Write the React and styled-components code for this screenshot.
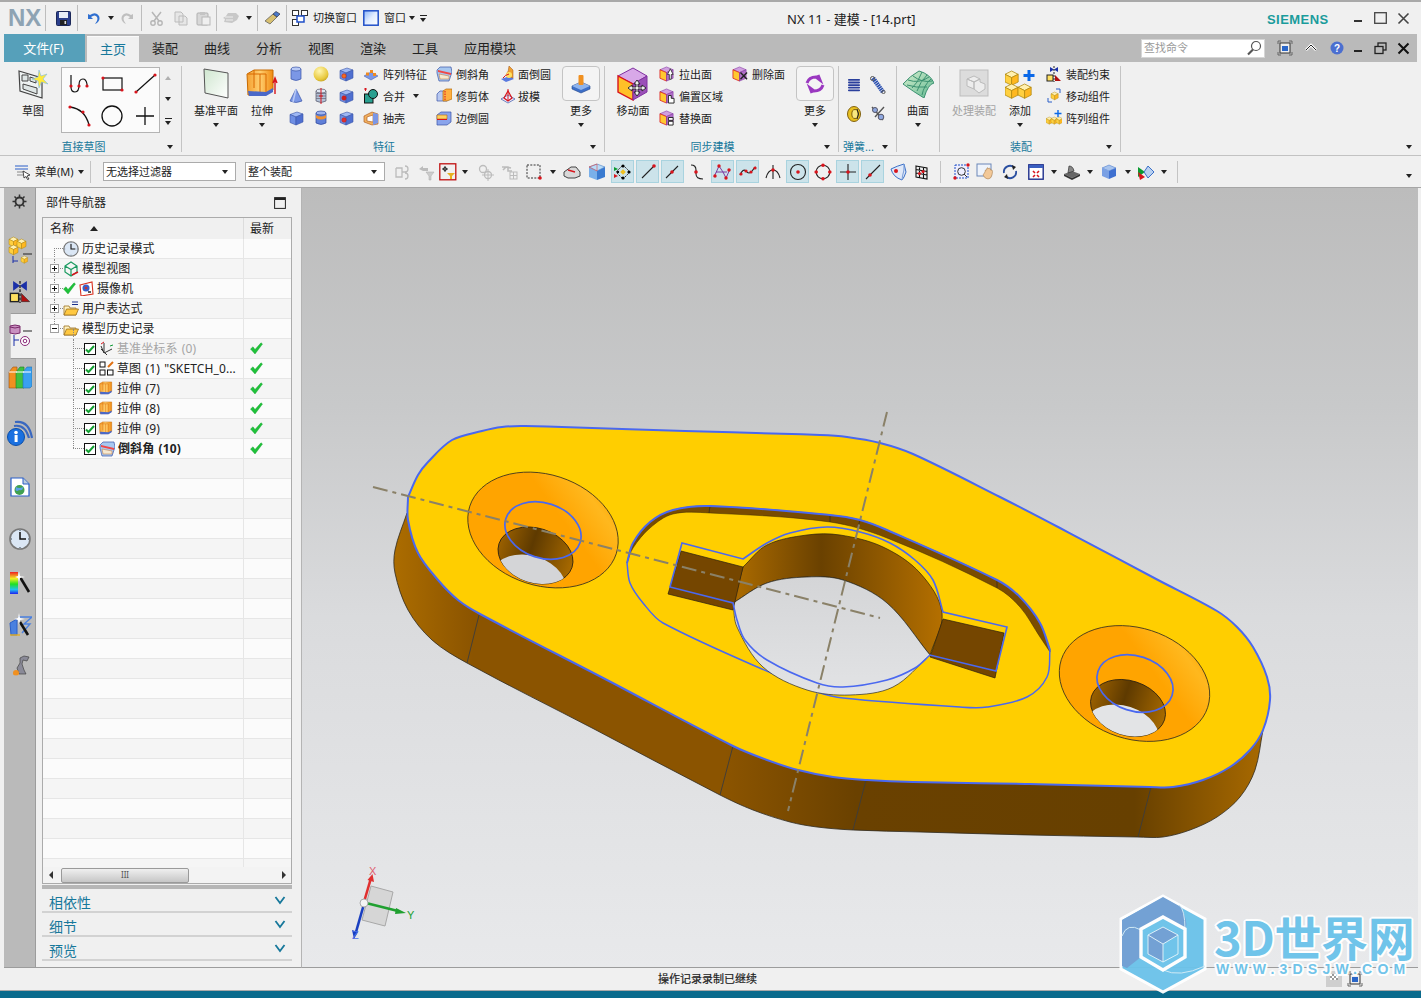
import React from 'react';
import styled, { createGlobalStyle } from 'styled-components';

const FONT = '"Noto Sans", "Noto Sans CJK SC", sans-serif';
const TEAL = '#17789b';

const Global = createGlobalStyle`
  html, body { margin: 0; padding: 0; background: #f0f0f0; }
  * { box-sizing: border-box; }
`;

const Page = styled.div`
  position: relative; width: 1421px; height: 998px; overflow: hidden;
  display: flex; flex-direction: column; background: #f0f0f0;
  font-family: ${FONT}; font-size: 11px; color: #222; line-height: 14px;
`;
const Svg = styled.svg`display: block; flex: none;`;
const Ic = ({ w = 16, h, v, children }) => (
  <Svg width={w} height={h || w} viewBox={v || `0 0 ${w} ${h || w}`}>{children}</Svg>
);

/* ---------- title bar ---------- */
const TitleBar = styled.div`
  height: 34px; flex: none; display: flex; align-items: center;
  border-top: 2px solid #a9a9a9; padding-left: 8px; position: relative;
`;
const NxLogo = styled.div`
  width: 37px; font: bold 24px/30px "Liberation Sans", sans-serif; color: #8ea3b3; letter-spacing: 0;
`;
const QSep = styled.div`width: 1px; height: 26px; background: #bdbdbd; flex: none; margin-left: ${p => p.$ml || 0}px;`;
const QItem = styled.div`
  display: flex; align-items: center; justify-content: center; flex: none;
  width: ${p => p.$w}px; height: 24px; padding-left: ${p => p.$pl || 0}px;
`;
const QGroup = styled.div`display: flex; align-items: center; width: 779px; flex: none;`;
const QText = styled.span`font-size: 11px; white-space: nowrap;`;
const MoreBar = styled.div`display: flex; flex-direction: column; align-items: center; gap: 2px;`;
const MoreBarLine = styled.div`width: 7px; height: 1px; background: #222;`;
const WindowTitle = styled.div`font-size: 13px; line-height: 16px; color: #222; white-space: nowrap; width: 480px; padding-top: 1px;`;
const Siemens = styled.div`
  font: bold 13px/16px "Liberation Sans", sans-serif; letter-spacing: .45px; color: #1a9c9c; width: 82px; white-space: nowrap; padding-top: 3px;
`;
const WinBtn = styled.div`width: ${p => p.$w || 23}px; display: flex; justify-content: center; flex: none;`;

/* ---------- tabs ---------- */
const TabBar = styled.div`
  height: 28px; flex: none; margin: 0 4px; background: #bababa; display: flex; align-items: stretch;
`;
const FileTab = styled.div`
  width: 81px; margin-right: 2px; background: #56a0ba; color: #fff; font-size: 13px;
  display: flex; align-items: center; justify-content: center; padding-right: 2px;
`;
const Tab = styled.div`
  width: ${p => p.$w || 52}px; flex: none; display: flex; align-items: center; justify-content: center; font-size: 13px;
  color: ${p => (p.$on ? TEAL : '#222')};
  ${p => p.$on && `background:#f0f0f0; margin-top:2px; padding-bottom:2px; border-top:1px solid #fafafa;`}
`;
const TabRight = styled.div`margin-left: auto; display: flex; align-items: center; padding-right: 7px;`;
const Search = styled.div`
  width: 124px; height: 19px; background: #fff; border: 1px solid #d6d6d6; color: #9a9a9a; display: flex;
  align-items: center; justify-content: space-between; padding: 0 2px 0 2px; font-size: 11px;
`;
const TabIcon = styled.div`width: ${p => p.$w}px; margin-left: ${p => p.$ml || 0}px; display: flex; justify-content: center; flex: none;`;

/* ---------- ribbon ---------- */
const Ribbon = styled.div`height: 93px; flex: none; display: flex; padding-left: 4px; background: #f0f0f0;`;
const Group = styled.div`
  position: relative; width: ${p => p.$w}px; flex: ${p => (p.$w ? 'none' : 1)}; display: flex; flex-direction: column;
  ${p => p.$w && `&::after { content:''; position:absolute; right:0; top:4px; bottom:3px; width:1px; background:#c4c4c4; }`}
`;
const Body = styled.div`height: 76px; display: flex; padding-top: 1px;`;
const LabelRow = styled.div`
  height: 17px; display: flex; align-items: center;
  ${p => p.$end && 'justify-content: flex-end; padding-right: 9px;'}
`;
const GroupName = styled.div`
  flex: 1; text-align: ${p => p.$left ? 'left' : 'center'}; color: ${TEAL}; font-size: 11px; white-space: nowrap;
  padding-left: ${p => p.$left ? 4 : 0}px;
`;
const Caret = styled.span`
  display: inline-block; flex: none; width: 0; height: 0; border-left: 3.5px solid transparent;
  border-right: 3.5px solid transparent; border-top: 4px solid ${p => p.$c || '#222'};
  margin-left: ${p => p.$ml || 0}px;
  transform: ${p => (p.$up ? 'rotate(180deg)' : 'none')};
`;
const MoreCaret = styled.div`width: 19px; flex: none; padding-left: 4px; display: flex; align-items: center;`;
const Big = styled.div`
  width: ${p => p.$w}px; margin-left: ${p => p.$ml || 0}px; flex: none; display: flex; flex-direction: column; align-items: center;
  color: ${p => (p.$off ? '#a4a4a4' : '#222')}; white-space: nowrap;
`;
const BigIcon = styled.div`height: 41px; display: flex; align-items: center; justify-content: center;`;
const BigLabel = styled.div`height: 14px; line-height: 14px; font-size: 11px;`;
const BigCaret = styled.div`height: 14px; display: flex; align-items: center;`;
const Gallery = styled.div`
  width: 99px; height: 66px; margin: 4px 0 0 8px; background: #fbfbfb; border: 1px solid #b4b4b4; flex: none;
  display: grid; grid-template-columns: repeat(3, 33px); grid-auto-rows: 32px; justify-items: center; align-items: center;
`;
const Scroller = styled.div`
  width: 16px; margin-top: 4px; height: 66px; display: flex; flex-direction: column; align-items: center;
  justify-content: space-around; flex: none;
`;
const IconGrid = styled.div`
  margin-left: ${p => p.$ml}px; display: grid; flex: none;
  grid-template-columns: ${p => p.$cols}; grid-auto-rows: ${p => p.$row || 22}px; justify-items: center; align-items: center;
  padding-top: ${p => p.$pt || 0}px; align-self: flex-start;
`;
const SmallCol = styled.div`width: ${p => p.$w}px; margin-left: ${p => p.$ml || 0}px; flex: none; display: flex; flex-direction: column;`;
const Small = styled.div`
  height: 22px; display: flex; align-items: center; gap: ${p => p.$gap || 4}px; white-space: nowrap; font-size: 11px;
`;
const SmallText = styled.span`padding-top: 1px;`;
const MoreBox = styled.div`
  width: 38px; height: 35px; margin-top: 3px; border: 1px solid #c4c4c4; border-radius: 4px; background: #f4f4f4;
  display: flex; align-items: center; justify-content: center; flex: none;
`;
const MoreWrap = styled.div`
  width: 38px; flex: none; display: flex; flex-direction: column; align-items: center;
`;
const MoreLabel = styled.div`margin-top: 3px; height: 14px; font-size: 11px;`;

/* ---------- toolbar ---------- */
const Toolbar = styled.div`
  height: 33px; flex: none; display: flex; align-items: center; padding-left: 14px; background: #f0f0f0;
  border-top: 1px solid #c2c2c2; border-bottom: 1px solid #a6a6a6;
`;
const MenuBtn = styled.div`display: flex; align-items: center; gap: 4px; width: 76px; flex: none; font-size: 11px;`;
const ToolSep = styled.div`width: 1px; height: 22px; background: #c4c4c4; flex: none; margin-left: ${p => p.$ml}px;`;
const Combo = styled.div`
  width: ${p => p.$w}px; height: 19px; margin-left: ${p => p.$ml}px; background: #fff; border: 1px solid #ababab;
  display: flex; align-items: center; justify-content: space-between; padding: 0 7px 0 2px; font-size: 11px; flex: none;
`;
const Tool = styled.div`
  width: ${p => p.$w}px; height: 24px; flex: none; display: flex; align-items: center; justify-content: center;
  margin-left: ${p => p.$ml || 0}px;
`;
const Chip = styled.div`
  width: 23px; height: 23px; display: flex; align-items: center; justify-content: center; flex: none;
  background: ${p => (p.$on ? '#cce3ea' : 'transparent')}; border: 1px solid ${p => (p.$on ? '#a9d3df' : 'transparent')};
`;
const ToolEnd = styled.div`margin-left: auto; padding: 5px 9px 0 0;`;

/* ---------- main ---------- */
const Main = styled.div`height: 780px; flex: none; display: flex; padding: 0 3px 0 4px;`;
const SideBar = styled.div`
  width: 32px; flex: none; background: #bababa; border-right: 1px solid #9c9c9c; border-bottom: 1px solid #9c9c9c;
  display: flex; flex-direction: column; align-items: center;
`;
const SideItem = styled.div`
  width: 100%; height: ${p => p.$h}px; margin-top: ${p => p.$mt || 0}px; flex: none; display: flex; align-items: center; justify-content: center;
  ${p => p.$on && `background:#f0f0f0; margin-left:6px; width:calc(100% - 5px); padding-right:4px; border-top:1px solid #9c9c9c; border-bottom:1px solid #9c9c9c; border-left:1px solid #c8c8c8;`}
`;
const Nav = styled.div`
  width: 266px; flex: none; display: flex; flex-direction: column; padding-left: 6px;
  border-right: 1px solid #b4b4b4; border-bottom: 1px solid #9c9c9c; background: #f0f0f0;
`;
const NavTitle = styled.div`
  height: 29px; width: 250px; display: flex; align-items: center; justify-content: space-between; padding: 0 6px 0 4px; font-size: 12px;
`;
const TreeBox = styled.div`
  width: 250px; height: 667px; flex: none; border: 1px solid #ababab; display: flex; flex-direction: column; background: #fff; overflow: hidden;
`;
const TreeHead = styled.div`
  height: 21px; flex: none; background: #f0f0f0; display: grid; grid-template-columns: 201px 1fr; font-size: 12px;
`;
const HeadCell = styled.div`
  display: flex; align-items: center; padding-left: ${p => p.$pl}px; gap: 16px;
  ${p => p.$line && 'border-right: 1px solid #dcdcdc;'}
`;
const SortUp = styled.span`width:0;height:0;border-left:4px solid transparent;border-right:4px solid transparent;border-bottom:5px solid #222;`;
const TreeRows = styled.div`flex: 1; overflow: hidden; min-height: 0;`;
const Row = styled.div`
  position: relative; height: 20px; display: grid; grid-template-columns: 201px 1fr;
  background: ${p => (p.$alt ? '#f5f5f5' : '#fbfbfb')}; border-bottom: 1px solid #e6e6e6;
`;
const NameCell = styled.div`
  position: relative; display: flex; align-items: center; gap: 3px; padding-left: ${p => p.$pl}px;
  border-right: 1px solid #e6e6e6; font-size: 12px; white-space: nowrap; overflow: hidden; word-spacing: 1px; letter-spacing: .12px;
  color: ${p => (p.$off ? '#a6a6a6' : '#222')}; font-weight: ${p => (p.$b ? 700 : 400)};
`;
const LatestCell = styled.div`display: flex; align-items: center; padding-left: 6px;`;
const Expander = styled.div`width: 9px; height: 9px; flex: none; margin-right: 1px; position: relative; z-index: 1;`;
const Spacer = styled.div`width: ${p => p.$w}px; flex: none;`;
const VGuide = styled.div`
  position: absolute; left: ${p => p.$x}px; top: ${p => p.$t}px; height: ${p => p.$h}px; border-left: 1px dotted #888;
`;
const HGuide = styled.div`
  position: absolute; left: ${p => p.$x}px; top: 9px; width: ${p => p.$w}px; border-top: 1px dotted #888;
`;
const HScroll = styled.div`
  height: 16px; flex: none; background: #f3f3f3; display: flex; align-items: center; padding: 0 5px 0 6px;
`;
const Thumb = styled.div`
  width: 128px; height: 15px; margin-left: 8px; border: 1px solid #9a9a9a; border-radius: 2px;
  background: linear-gradient(#efefef, #c6c6c6); display: flex; align-items: center; justify-content: center;
  font-size: 8px; line-height: 8px; color: #555; letter-spacing: 0;
`;
const ArrowL = styled.span`width:0;height:0;border-top:4px solid transparent;border-bottom:4px solid transparent;border-right:4px solid #333;flex:none;`;
const ArrowR = styled.span`width:0;height:0;border-top:4px solid transparent;border-bottom:4px solid transparent;border-left:4px solid #333;flex:none;margin-left:auto;`;
const PanelRule = styled.div`width: 250px; height: 4px; background: #b6b6b6; flex: none; margin-top: 1px;`;
const Section = styled.div`
  width: 250px; height: 24px; flex: none; display: flex; align-items: center; justify-content: space-between;
  padding: 5px 6px 0 7px; border-bottom: 2px solid #d2d2d2; color: ${TEAL}; font-size: 14px;
`;
const SectionChev = styled.div`margin-top: -5px;`;
const Viewport = styled.div`
  flex: 1; min-width: 0; background: linear-gradient(#bcbcbc 0%, #c8c9ca 28%, #dadbdd 55%, #e8e9eb 100%);
  border-top: 0; border-bottom: 1px solid #9c9c9c;
`;
const StatusBar = styled.div`
  height: 22px; flex: none; position: relative; display: flex; align-items: center; justify-content: center;
  font-size: 11px; padding-right: 6px; -webkit-text-stroke: .2px #222;
`;
const StatusIcons = styled.div`
  position: absolute; right: 58px; top: 3px; display: flex; gap: 5px; align-items: center;
`;
const Band = styled.div`height: 8px; flex: none; background: #0a6a8c; border-top: 1px solid #a8a8a8;`;

/* ---------- watermark ---------- */
const Watermark = styled.div`
  position: absolute; left: 1119px; top: 894px; width: 300px; display: flex; opacity: .96; pointer-events: none;
`;
const WmText = styled.div`
  margin-left: 7px; display: flex; flex-direction: column; color: #6cc3ea; white-space: nowrap;
  text-shadow: 2px 0 #fff, -2px 0 #fff, 0 2px #fff, 0 -2px #fff, 1.5px 1.5px #fff, -1.5px -1.5px #fff, 1.5px -1.5px #fff, -1.5px 1.5px #fff;
`;
const WmBig = styled.div`font: 700 47px/46px "Noto Sans CJK SC", "Noto Sans", sans-serif; margin-top: 19px; letter-spacing: -.4px;`;
const WmSmall = styled.div`font: 700 14px/14px "Liberation Sans", sans-serif; letter-spacing: 5.2px; margin: 3px 0 0 2px;`;

/* ---------- icons ---------- */
const R = '#d8141c';
const dot = (x, y, r = 1.6) => <circle cx={x} cy={y} r={r} fill={R} />;

const Save = () => <Ic w={15}><rect x=".5" y=".5" width="14" height="14" rx="1" fill="#2b3f8c" stroke="#1c2858" /><rect x="3" y="1" width="9" height="6" fill="#e8eef8" /><rect x="4" y="9" width="7" height="5" fill="#222" /><rect x="8.5" y="10" width="1.6" height="3" fill="#ddd" /></Ic>;
const Undo = ({ c = '#2f6fd0' }) => <Ic w={14}><path d="M2 3 v5 h5 L5 6 Q9 3 11 6 Q12.5 9 9 13 Q15 10 13 5 Q10 0 4 4z" fill={c} /></Ic>;
const Redo = ({ c = '#bfbfbf' }) => <Ic w={14}><path d="M12 3 v5 h-5 L9 6 Q5 3 3 6 Q1.5 9 5 13 Q-1 10 1 5 Q4 0 10 4z" fill={c} /></Ic>;
const Cut = () => <Ic w={15}><path d="M12 1 L5 10 M3 1 L10 10" stroke="#b6b6b6" strokeWidth="1.5" /><circle cx="4" cy="12" r="2.2" fill="none" stroke="#b6b6b6" strokeWidth="1.4" /><circle cx="11" cy="12" r="2.2" fill="none" stroke="#b6b6b6" strokeWidth="1.4" /></Ic>;
const Copy = () => <Ic w={15}><path d="M2 1h6l2 2v8H2z M6 5h6l2 2v7H6z" fill="#e6e6e6" stroke="#bcbcbc" /></Ic>;
const Paste = () => <Ic w={15}><rect x="1" y="2" width="11" height="12" rx="1" fill="#d8d8d8" stroke="#b0b0b0" /><rect x="4" y="1" width="5" height="3" fill="#c4c4c4" /><rect x="6" y="6" width="8" height="8" fill="#efefef" stroke="#b8b8b8" /></Ic>;
const GreySmear = () => <Ic w={18}><path d="M6 4h8l3 3-2 4-5 3-8-1 1-3-2-1 3-2z" fill="#c8c8c8" /><path d="M3 8h8M4 11h7" stroke="#eee" /></Ic>;
const Eraser = () => <Ic w={17}><path d="M1 11 L9 4 L13 7 L6 14z" fill="#d8c070" stroke="#555" strokeWidth=".7" /><path d="M9 4 L12 1.5 L16 4 L13 7z" fill="#4a78c8" stroke="#334" strokeWidth=".7" /></Ic>;
const SwitchWin = () => <Ic w={16}><rect x=".5" y=".5" width="6" height="5" fill="#fff" stroke="#333" /><rect x="9.5" y=".5" width="6" height="5" fill="#fff" stroke="#333" /><rect x=".5" y="9.5" width="6" height="6" fill="#fff" stroke="#333" /><rect x="5" y="6" width="7" height="6" fill="#fff" stroke="#1f4fc8" strokeWidth="1.5" /></Ic>;
const WinIcon = () => <Svg width="16" height="16" viewBox="0 0 16 16"><defs><linearGradient id="wg" x1="0" y1="0" x2="1" y2="1"><stop offset="0" stopColor="#8ab4f8" /><stop offset=".5" stopColor="#e0ecff" /><stop offset="1" stopColor="#fff" /></linearGradient></defs><rect x=".8" y=".8" width="14.4" height="14.4" fill="url(#wg)" stroke="#1f4fc8" strokeWidth="1.5" /></Svg>;
const Min = ({ c = '#333', w = 2 }) => <Ic w={10}><rect x="1" y="7" width="8" height={w} fill={c} /></Ic>;
const Max = () => <Ic w={13}><rect x=".7" y=".7" width="11.6" height="10.6" fill="none" stroke="#444" strokeWidth="1.3" /></Ic>;
const Close = ({ c = '#444', sw = 1.6 }) => <Ic w={13}><path d="M1.5 1.5 L11.5 11.5 M11.5 1.5 L1.5 11.5" stroke={c} strokeWidth={sw} /></Ic>;
const Restore = () => <Ic w={13}><rect x="4" y="1" width="8" height="7" fill="none" stroke="#222" strokeWidth="1.3" /><rect x="1" y="4.5" width="8" height="7" fill="#bababa" stroke="#222" strokeWidth="1.3" /></Ic>;
const Glass = () => <Ic w={16}><circle cx="10" cy="6" r="4.5" fill="#fff" stroke="#555" strokeWidth="1.2" /><path d="M7 9.5 L2 14.5" stroke="#555" strokeWidth="2.2" /></Ic>;
const FitFrame = () => <Ic w={16}><path d="M1 4V1h3 M12 1h3v3 M15 12v3h-3 M4 15H1v-3" fill="none" stroke="#666" /><rect x="3" y="3" width="10" height="10" fill="#eee" stroke="#333" /><rect x="5" y="6" width="6" height="5" fill="#2a66c8" /></Ic>;
const UpChev = () => <Ic w={14}><path d="M2 9 L7 4 L12 9" fill="none" stroke="#fff" strokeWidth="2.6" /><path d="M2 9 L7 4 L12 9" fill="none" stroke="#222" strokeWidth="1" /></Ic>;
const Help = () => <Svg width="14" height="14" viewBox="0 0 14 14"><circle cx="7" cy="7" r="6.5" fill="#4b6fd0" /><text x="7" y="10.5" textAnchor="middle" fontSize="10" fontWeight="700" fill="#fff" fontFamily="Liberation Sans">?</text></Svg>;

const SketchBig = () => <Ic w={30}><path d="M1 2 L24 9 V29 L2 22z" fill="#eef2f2" stroke="#444" strokeWidth="1.2" /><path d="M4 6h6v6H4z M12 8l6 2v4l-6-2z M5 15l14 4v6L5 20z" fill="#dfe6e6" stroke="#444" /><path d="M21 1 L23 7 L29 5 L25 10 L30 15 L23.5 13 L21 19 L20 12 L14 10 L20 8z" fill="#ffe93a" stroke="#7fb8e8" strokeWidth=".6" /></Ic>;
const Sk1 = () => <Ic w={26}><path d="M5 4 V16 Q5 21 9 21 Q13 21 13 14 Q13 8 17 8 Q20 8 21 13 V16 " fill="none" stroke="#111" strokeWidth="1.2" />{dot(5, 15)}{dot(13, 15)}{dot(21, 15)}</Ic>;
const Sk2 = () => <Ic w={26}><rect x="4" y="7" width="19" height="12" fill="none" stroke="#111" strokeWidth="1.2" />{dot(4, 7)}{dot(23, 19)}</Ic>;
const Sk3 = () => <Ic w={26}><path d="M4 21 L23 4" stroke="#111" strokeWidth="1.2" />{dot(4, 21)}{dot(23, 4)}</Ic>;
const Sk4 = () => <Ic w={26}><path d="M4 4 Q19 6 23 22" fill="none" stroke="#111" strokeWidth="1.3" />{dot(4, 4)}{dot(17, 9)}{dot(23, 22)}</Ic>;
const Sk5 = () => <Ic w={24}><circle cx="12" cy="12" r="10" fill="none" stroke="#111" strokeWidth="1.3" /></Ic>;
const Sk6 = () => <Ic w={20}><path d="M10 1 V19 M1 10 H19" stroke="#111" strokeWidth="1.3" /></Ic>;

const Datum = () => <Svg width="26" height="31" viewBox="0 0 26 31"><defs><linearGradient id="dp" x1="0" y1="0" x2="1" y2="1"><stop offset="0" stopColor="#cfe6cf" /><stop offset="1" stopColor="#fff" /></linearGradient></defs><path d="M1 1 L25 5 V30 L2 25z" fill="url(#dp)" stroke="#555" /></Svg>;
const Extrude = ({ s = 32, arrow = true }) => <Svg width={s} height={s} viewBox="0 0 32 32"><defs><linearGradient id="ex" x1="0" y1="0" x2="1" y2="0"><stop offset="0" stopColor="#f5a030" /><stop offset=".5" stopColor="#ffcf70" /><stop offset="1" stopColor="#f08a10" /></linearGradient></defs><path d="M1 6 L8 2 H27 V22 L20 27 H2z" fill="url(#ex)" stroke="#c86a00" /><path d="M8 2 V20 M2 6 H20 V27 M14 6 V27" stroke="#d96800" fill="none" strokeWidth="1" /><path d="M2 23 L20 24 L27 20 V24 L20 28 H3z" fill="#4a68c8" />{arrow && <path d="M29 26 V12 M27 15 L29 10 L31 15" stroke={R} fill="none" strokeWidth="1.4" />}</Svg>;
const cylBody = (a, b, c) => <><path d="M3 3 V13 Q8 16 13 13 V3z" fill={a} stroke={c} strokeWidth=".7" /><ellipse cx="8" cy="3" rx="5" ry="2" fill={b} stroke={c} strokeWidth=".7" /></>;
const Cyl = () => <Ic w={16}>{cylBody('#7b97e6', '#b8c9f5', '#3a55a8')}</Ic>;
const Sphere = () => <Svg width="16" height="16" viewBox="0 0 16 16"><defs><radialGradient id="sph" cx=".4" cy=".3" r=".8"><stop offset="0" stopColor="#fff6b0" /><stop offset=".7" stopColor="#e8c83c" /><stop offset="1" stopColor="#b89820" /></radialGradient></defs><circle cx="8" cy="8" r="7.5" fill="url(#sph)" /></Svg>;
const Block = ({ hole = '#f07020', top = '#9fb8f4', left = '#6f8fe4', right = '#4f6fd0', k }) => <Ic w={16}><path d="M2 4.5 L9 2 L15 4 L8 7z" fill={top} stroke="#3a55a8" strokeWidth=".6" /><path d="M2 4.5 L8 7 V15 L2 12.5z" fill={left} stroke="#3a55a8" strokeWidth=".6" /><path d="M8 7 L15 4 V12 L8 15z" fill={right} stroke="#3a55a8" strokeWidth=".6" />{hole && <circle cx="6" cy="10" r="2.2" fill={hole} stroke="#c02020" strokeWidth=".6" />}{k}</Ic>;
const Cone = () => <Ic w={16}><path d="M8 1 L14 13 Q8 16 2 13z" fill="#7b97e6" stroke="#3a55a8" strokeWidth=".7" /><path d="M8 1 L5 14" stroke="#b8c9f5" strokeWidth="1.5" /></Ic>;
const Thread = () => <Ic w={16}>{cylBody('#b4c2d8', '#dfe6f2', '#556')}<path d="M3 5.5h10M3 8h10M3 10.5h10" stroke="#667" strokeWidth=".7" /><path d="M8 0V16 M6 8h4" stroke={R} strokeWidth="1" /></Ic>;
const Ring = () => <Ic w={16}>{cylBody('#5f7fd8', '#9fb4ee', '#2f469a')}<path d="M3 5 Q8 8 13 5 V8 Q8 11 3 8z" fill="#f09030" /></Ic>;
const Pattern = () => <Ic w={16}><path d="M1 10 L8 6 L15 10 L8 14z" fill="#7b97e6" stroke="#3a55a8" strokeWidth=".5" /><rect x="3" y="6.5" width="3" height="3" fill="#f08a20" /><rect x="7" y="4" width="3" height="3" fill="#f08a20" /><rect x="10" y="7" width="3" height="3" fill="#f08a20" /></Ic>;
const Unite = () => <Ic w={16}><path d="M1 1h3M2.5 0v3" stroke={R} /><rect x="1.5" y="6" width="8.5" height="9" fill="#2aa090" stroke="#111" /><circle cx="10" cy="6" r="4.5" fill="#2aa090" stroke="#111" /></Ic>;
const Shell = () => <Ic w={16}><path d="M1 6 L9 2 L15 4 V14 L9 15 L1 12z" fill="#f0b060" stroke="#a85010" strokeWidth=".6" /><path d="M4 7 L10 5 V12 L4 11z" fill="#fff" stroke="#a85010" strokeWidth=".6" /><path d="M10 3 V15 L15 13 V4z" fill="#7b97e6" /></Ic>;
const Chamfer = () => <Ic w={16}><path d="M1 4 L4 1 H15 L16 6 L13 15 H3 L1 7z" fill="#a8c8f0" stroke="#3a55a8" strokeWidth=".7" /><path d="M2 4 L15 7 V9 L2 6z" fill="#f04848" /><path d="M3 8 L13 10 V13 H4z" fill="#f4e8d0" stroke="#c07030" strokeWidth=".5" /></Ic>;
const Trim = () => <Ic w={16}><path d="M1 6 L4 3 H11 V13 H1z" fill="#b8c8f0" stroke="#3a55a8" strokeWidth=".7" /><path d="M7 3 L10 1 H16 V11 L11 13 H7z" fill="#ffb040" stroke="#b06a10" strokeWidth=".7" /><path d="M9 3 V13" stroke={R} strokeDasharray="1.5 1" /></Ic>;
const Blend = () => <Ic w={16}><path d="M1 5 L5 2 H15 V12 L11 15 H1z" fill="#8aa4ec" stroke="#3a55a8" strokeWidth=".7" /><path d="M1 5 H11 V9 H1z" fill="#ffd060" stroke="#b06a10" strokeWidth=".6" /><path d="M1 9 H11 V10 H1z" fill={R} /></Ic>;
const FaceBlend = () => <Ic w={16}><path d="M1 13 L10 10 L14 13 L6 16z" fill="#5a7ae0" /><path d="M9 0 L13 4 V12 L6 9 Q9 5 9 0z" fill="#f0a030" stroke="#a05010" strokeWidth=".5" /><circle cx="9" cy="9" r="3" fill="#ffe060" /><path d="M3 12 Q5 9 9 8" stroke={R} fill="none" /></Ic>;
const Draft = () => <Ic w={16}><path d="M1 11 L8 7 L15 11 L8 15z" fill="#eef" stroke="#3a55a8" strokeWidth=".7" /><path d="M4 10 L8 3 L12 10 L8 13z" fill="none" stroke={R} strokeWidth="1.2" /><path d="M8 1V13" stroke={R} /></Ic>;
const MoreFeat = () => <Ic w={20}><path d="M1 12 L10 8 L19 12 V15 L10 19 L1 15z" fill="#3d6fc8" stroke="#24468c" strokeWidth=".6" /><path d="M1 12 L10 8 L19 12 L10 16z" fill="#8fb4ec" /><rect x="7.5" y="1" width="5" height="10" rx="1" fill="#f09020" /></Ic>;
const SyncCube = ({ k }) => <Ic w={16} v="0 0 17 17"><path d="M1 4 L8 1 L15 4 L8 7z" fill="#d0a0e0" stroke="#8030a0" strokeWidth=".6" /><path d="M1 4 L8 7 V16 L1 13z" fill="#ffc830" stroke={R} strokeWidth=".8" /><path d="M8 7 L15 4 V13 L8 16z" fill="#b070c8" stroke="#8030a0" strokeWidth=".6" />{k}</Ic>;
const MoveFace = () => <Ic w={34}><path d="M2 9 L17 1 L31 9 L17 17z" fill="#d8a8e8" stroke="#8030a0" /><path d="M2 9 L17 17 V33 L2 25z" fill="#ffc028" stroke={R} strokeWidth="1.4" /><path d="M17 17 L31 9 V25 L17 33z" fill="#9a50b8" stroke="#8030a0" /><path d="M21 13 L24 17 H22 V20 H26 V18 L30 21 L26 24 V22 H22 V25 H24 L21 29 L18 25 H20 V22 H16 V24 L12 21 L16 18 V20 H20 V17 H18z" fill="#eee" stroke="#222" strokeWidth=".9" /></Ic>;
const Refresh = () => <Ic w={20}><path d="M2 9 Q4 3 11 3 L15 6 L13 1 M18 11 Q16 17 9 17 L5 14 L7 19" fill="none" stroke="#9a38c0" strokeWidth="3" /></Ic>;
const Coil = () => <Ic w={16}>{[2, 4.6, 7.2, 9.8, 12.4].map(y => <rect key={y} x="2" y={y} width="12" height="1.8" rx=".8" fill="#2a3f9c" />)}</Ic>;
const Spring2 = () => <Ic w={18}><path d="M4 2 L14 16" stroke="#2a4fb0" strokeWidth="4.5" strokeDasharray="1.6 .6" /><circle cx="3.5" cy="2.5" r="2" fill="none" stroke="#555" /><circle cx="14.5" cy="16" r="1.6" fill="none" stroke="#555" /></Ic>;
const Nut = () => <Svg width="16" height="16" viewBox="0 0 16 16"><ellipse cx="8" cy="8" rx="6.5" ry="7.5" fill="#e8c020" stroke="#806010" /><ellipse cx="9" cy="8" rx="3.2" ry="4.5" fill="#f8e880" stroke="#806010" /><path d="M11 3 Q14 8 11 13" stroke="#222" fill="none" /></Svg>;
const Scissor = () => <Ic w={16}><path d="M2 1 L13 14 M14 1 L5 11" stroke="#555" strokeWidth="1.4" /><circle cx="5" cy="4" r="2.5" fill="#8fa8e0" stroke="#556" /><circle cx="11" cy="11" r="2.8" fill="#8fa8e0" stroke="#556" /></Ic>;
const Surface = () => <Svg width="32" height="28" viewBox="0 0 32 28"><defs><linearGradient id="sf" x1="0" y1="0" x2="1" y2="1"><stop offset="0" stopColor="#d8f0d0" /><stop offset="1" stopColor="#60b890" /></linearGradient></defs><path d="M1 14 Q8 6 17 1 Q28 4 32 13 Q26 14 22 28 Q12 22 1 14z" fill="url(#sf)" stroke="#3a9070" /><path d="M6 10 Q17 14 27 7 M11 6 Q20 13 30 11 M5 15 Q14 18 25 17 M10 18 Q16 13 20 2 M15 21 Q18 12 25 5 M20 25 Q22 15 29 9" fill="none" stroke="#3a9070" /></Svg>;
const AsmGrey = () => <Ic w={30}><rect x="1" y="1" width="28" height="26" fill="#dcdcdc" stroke="#bdbdbd" /><path d="M8 10 L15 7 L21 10 L15 13z M8 10 L15 13 V20 L8 17z M15 13 L21 10 V13 L26 15 V20 L20 24 L15 20z" fill="#ededed" stroke="#bbb" /></Ic>;
const yCube = (x, y, s) => <g transform={`translate(${x} ${y}) scale(${s})`}><path d="M0 3 L6 0 L12 3 L6 6z" fill="#fff0b0" stroke="#b08810" strokeWidth=".7" /><path d="M0 3 L6 6 V13 L0 10z" fill="#ffd040" stroke="#b08810" strokeWidth=".7" /><path d="M6 6 L12 3 V10 L6 13z" fill="#ffb820" stroke="#b08810" strokeWidth=".7" /></g>;
const AddAsm = () => <Ic w={30}>{yCube(0, 2, 1.1)}{yCube(0, 15, 1.1)}{yCube(13, 15, 1.1)}<path d="M24 1V12 M18.5 6.5H29.5" stroke="#0a68e8" strokeWidth="3" /></Ic>;
const Constraint = () => <Ic w={16}><rect x="1" y="9" width="6" height="6" fill="#ffe060" stroke="#222" /><path d="M9 9 V15 H15z" fill="#b01010" /><path d="M4 1 L8 3.5 L4 6z M12 1 L8 3.5 L12 6z" fill="#1a2fa8" /><path d="M8 0V16" stroke="#222" strokeDasharray="2 1" /></Ic>;
const MoveComp = () => <Ic w={16}>{yCube(5, 4, .6)}<path d="M2 14V10 M2 14H6 M10 1H14V5" stroke="#2a5fc8" fill="none" /></Ic>;
const PatComp = () => <Ic w={16}>{yCube(0, 7, .55)}{yCube(5, 7, .55)}{yCube(10, 7, .55)}<path d="M12 0V7 M8.5 3.5H15.5" stroke="#0a68e8" strokeWidth="1.4" /></Ic>;

const MenuIcon = () => <Ic w={17}><path d="M1 3h13M1 6h13" stroke="#2a5fc8" strokeWidth="1.2" /><path d="M3 9h8M3 12h6" stroke="#888" /><path d="M9 8 L16 12 L13 13 L15 16 L13.5 16.5 L12 13.5 L10 15z" fill="#fff" stroke="#222" strokeWidth=".8" /></Ic>;
const T = {
  g1: <Ic w={18}><path d="M2 5h6v4h4 M2 5v9h6V5 M11 3a3 3 0 1 1 0 6 M11 10a3 3 0 1 1 0 6" fill="none" stroke="#bcbcbc" strokeWidth="1.3" /></Ic>,
  g2: <Ic w={18}><path d="M1 6 L5 3 L5 5 L10 5 L10 8 L5 8z" fill="#bcbcbc" /><path d="M8 9h8l-3 4v4h-2v-4z" fill="#ccc" stroke="#aaa" strokeWidth=".5" /></Ic>,
  red: <Ic w={18}><rect x=".8" y=".8" width="16" height="16" fill="none" stroke="#c01010" strokeWidth="1.3" /><path d="M6 3V9 M3 6H9" stroke="#333" /><circle cx="6" cy="6" r="1.6" fill="none" stroke="#333" /><path d="M8 10h8l-3 3v3h-2v-3z" fill="#e8b020" /></Ic>,
  g3: <Ic w={18}><circle cx="7" cy="6" r="3.5" fill="none" stroke="#bcbcbc" strokeWidth="1.3" /><circle cx="12" cy="12" r="3.5" fill="none" stroke="#bcbcbc" strokeWidth="1.3" /><path d="M12 6V18 M6 12H18" stroke="#bcbcbc" /></Ic>,
  g4: <Ic w={18}><path d="M1 4h6v4h4M2 7l3-3 5 1" stroke="#bcbcbc" strokeWidth="1.6" fill="none" /><rect x="9" y="9" width="7" height="7" fill="none" stroke="#bcbcbc" /><path d="M12.5 9v7M9 12.5h7" stroke="#bcbcbc" /></Ic>,
  sel: <Ic w={18}><rect x="2" y="2" width="13" height="13" fill="none" stroke="#333" strokeDasharray="2 1.3" />{dot(15, 15, 1.8)}</Ic>,
  wedge: <Ic w={18}><path d="M1 9 L8 4 H13 L17 9 V13 L12 15 H5 L1 13z" fill="#d8d8d8" stroke="#444" /><path d="M5 7 L12 9" stroke={R} strokeWidth="1.4" /></Ic>,
  cube: <Ic w={18}><path d="M1 4 L9 1 L17 4 L9 8z" fill="#b8dcf8" stroke="#4a80c8" strokeWidth=".6" /><path d="M1 4 L9 8 V17 L1 14z" fill="#7ab0ea" /><path d="M9 8 L17 4 V14 L9 17z" fill="#3a7ad0" /><path d="M1 4 L9 1 V8z" stroke="#e04848" fill="none" strokeWidth=".6" /></Ic>,
  dia: <Ic w={18}><path d="M9 2 L16 9 L9 16 L2 9z" fill="none" stroke="#333" strokeDasharray="2 1" /><rect x="7" y="7" width="4" height="4" fill="#f0c020" transform="rotate(45 9 9)" /><path d="M0 4 L4 6 L0 8z" fill="#0a9a30" /><path d="M0 11 L4 13 L0 15z" fill={R} /><circle cx="9" cy="3" r="1.6" /><circle cx="9" cy="15" r="1.6" /><circle cx="15" cy="9" r="1.6" /><circle cx="4" cy="9" r="1.2" /></Ic>,
  l1: <Ic w={16}><path d="M2 14 L14 2" stroke="#222" strokeWidth="1.1" />{dot(14, 2, 1.8)}</Ic>,
  l2: <Ic w={16}><path d="M2 14 L14 2" stroke="#222" strokeWidth="1.1" />{dot(8, 8, 1.8)}</Ic>,
  scurve: <Ic w={16}><path d="M2 1 Q7 1 7 6 V10 Q7 15 14 15" fill="none" stroke="#222" strokeWidth="1.1" />{dot(7, 8, 1.8)}</Ic>,
  poly: <Ic w={18}><path d="M1 14 L6 3 L10 9 L13 15 L17 6 M3 9 H14" fill="none" stroke="#7a3aa0" strokeWidth="1" />{dot(6, 3, 1.7)}{dot(2, 13, 1.7)}{dot(13, 15, 1.7)}{dot(16, 7, 1.7)}</Ic>,
  wave: <Ic w={18}><path d="M1 12 Q4 5 7 8 Q10 12 13 8 Q15 5 17 4" fill="none" stroke="#222" strokeWidth="1.1" />{dot(2, 11)}{dot(7, 8)}{dot(12, 9)}{dot(16, 5)}</Ic>,
  arch: <Ic w={16}><path d="M1 14 Q3 6 8 6 Q13 6 15 14 M8 1V15" fill="none" stroke="#222" strokeWidth="1.1" />{dot(8, 6, 1.8)}</Ic>,
  cd: <Ic w={18}><circle cx="9" cy="9" r="7.5" fill="none" stroke="#222" strokeWidth="1.1" />{dot(9, 9, 1.8)}</Ic>,
  cq: <Ic w={18}><circle cx="9" cy="9" r="6.8" fill="none" stroke="#222" strokeWidth="1.1" />{dot(9, 2.2, 1.8)}{dot(9, 15.8, 1.8)}{dot(2.2, 9, 1.8)}{dot(15.8, 9, 1.8)}</Ic>,
  cross: <Ic w={18}><path d="M9 1V17 M1 9H17" stroke="#222" strokeWidth="1.1" />{dot(9, 9, 1.8)}</Ic>,
  l3: <Ic w={16}><path d="M1 15 L15 1" stroke="#222" strokeWidth="1.1" />{dot(5, 11, 1.8)}</Ic>,
  face: <Ic w={18}><path d="M2 6 Q8 3 15 1 L17 9 Q15 15 13 17 Q4 14 2 6z" fill="#dfe8f8" stroke="#3a6fc8" strokeWidth="1" /><path d="M15 1 V7 Q13 14 13 17" stroke="#7a9ed8" fill="#bcd0f0" />{dot(7, 8, 2)}</Ic>,
  grid: <Ic w={16}><path d="M2 2 L13 4 V15 L2 13z M5.5 2.6V13.6 M9.5 3.4V14.4 M2 5.5 L13 7.5 M2 9 L13 11" fill="none" stroke="#111" strokeWidth="1.1" />{dot(9, 7.5)}{dot(5.5, 9.5)}</Ic>,
  fit: <Ic w={17}><rect x="2" y="2" width="13" height="13" fill="#eef" stroke="#1f4fc8" strokeDasharray="2 1" /><circle cx="8.5" cy="8.5" r="3.8" fill="none" stroke="#333" /><path d="M11 11l3 3" stroke="#333" />{dot(15, 2, 1.7)}{dot(2, 15, 1.7)}</Ic>,
  pan: <Ic w={18}><rect x="1" y="1" width="14" height="12" fill="#eef3fb" stroke="#6a86b8" /><path d="M9 9 Q9 6 10.5 7 L11 5 Q12 4 12.5 6 L13.5 5 Q14.5 5 14.5 7 L16 7 Q17 8 16 12 Q15 16 12 16 Q9 16 7 12z" fill="#f2c898" stroke="#9a7040" strokeWidth=".5" /></Ic>,
  rot: <Ic w={16}><path d="M2 9 A6 6 0 0 1 12 3.5 M14 7 A6 6 0 0 1 4 12.5" fill="none" stroke="#2a4fa0" strokeWidth="1.8" /><path d="M10 1 L14 3 L11 6z M6 15 L2 13 L5 10z" fill="#222" /></Ic>,
  view: <Ic w={16}><rect x=".8" y=".8" width="14.4" height="14.4" fill="#fff" stroke="#1f2f8c" strokeWidth="1.4" /><rect x="1" y="1" width="14" height="3" fill="#3a5fc0" /><path d="M5 7l2 2 M11 7l-2 2 M5 13l2-2 M11 13l-2-2" stroke={R} strokeWidth="1.6" /></Ic>,
  shade: <Ic w={18}><path d="M1 11 L9 8 L17 11 L9 15z" fill="#666" /><path d="M6 3 Q10 3 11 8 L5 10z" fill="#888" stroke="#333" strokeWidth=".7" /><path d="M1 11 V13 L9 17 L17 13 V11 L9 15z" fill="#333" /></Ic>,
  bcube: <Ic w={16}><path d="M1 4 L8 1 L15 4 L8 7z" fill="#a8c4ee" stroke="#3a6fc8" strokeWidth=".5" /><path d="M1 4 L8 7 V15 L1 12z" fill="#7aa0e4" /><path d="M8 7 L15 4 V12 L8 15z" fill="#3f70d0" /></Ic>,
  tri: <Ic w={18}><path d="M1 4 L8 9 L1 14z" fill="#0a9a30" /><path d="M1 9 L8 14 L3 17z" fill={R} /><path d="M11 3 L17 9 L11 15 L7 9z" fill="#b8d0f0" stroke="#3a6fc8" /></Ic>,
};

const Gear = () => <Ic w={15}><circle cx="7.5" cy="7.5" r="4" fill="none" stroke="#333" strokeWidth="1.8" /><path d="M7.5 .5v3M7.5 11.5v3M.5 7.5h3M11.5 7.5h3M2.5 2.5l2 2M10.5 10.5l2 2M12.5 2.5l-2 2M4.5 10.5l-2 2" stroke="#333" strokeWidth="1.5" /></Ic>;
const AsmNav = () => <Ic w={24} h={28} v="0 0 24 28">{yCube(1, 1, .75)}{yCube(9, 3, .75)}{yCube(1, 9, .75)}<path d="M5 20V27 M5 25H10" stroke="#1a2fa8" strokeWidth="1" /><path d="M15 18H24" stroke="#222" />{yCube(13, 20, .55)}</Ic>;
const ConstraintBig = () => <Ic w={22} v="0 0 16 16"><rect x="1" y="9" width="6" height="6" fill="#ffe060" stroke="#222" /><path d="M9 9 V15 H15z" fill="#b01010" stroke="#222" strokeWidth=".4" /><path d="M3 0 L8 3.5 L3 7z M13 0 L8 3.5 L13 7z" fill="#1a2fa8" /><path d="M8 0V16" stroke="#222" strokeDasharray="2 1" /></Ic>;
const PartNav = () => <Ic w={24}><path d="M1 2 Q6 0 11 2 V9 Q6 11 1 9z" fill="#c890c0" stroke="#7a2a6a" /><path d="M1 3 Q6 5 11 3" stroke="#7a2a6a" fill="none" /><path d="M14 7H23" stroke="#222" /><path d="M5 11V22 M5 16H10" stroke="#1a2fa8" /><circle cx="16" cy="17" r="4.5" fill="#fff" stroke="#8a2a7a" /><circle cx="16" cy="17" r="1.8" fill="none" stroke="#8a2a7a" /></Ic>;
const Books = () => <Ic w={24}><path d="M1 6 L5 1 H9 V22 H1z" fill="#f09020" stroke="#a05010" strokeWidth=".6" /><path d="M8 6 L12 1 H16 V22 H8z" fill="#40c040" stroke="#208020" strokeWidth=".6" /><path d="M15 6 L19 1 H24 V20 L22 22 H15z" fill="#3aa0f0" stroke="#2070b0" strokeWidth=".6" /><path d="M1 6H9 M8 6H16 M15 6H23" stroke="#fff" /></Ic>;
const Info = () => <Svg width="26" height="26" viewBox="0 0 26 26"><path d="M7 6 Q18 4 22 18 M8 2 Q22 0 25 18" fill="none" stroke="#3a68c0" strokeWidth="2.2" /><circle cx="9" cy="17" r="8.5" fill="#1a70e0" stroke="#0c4ea8" /><rect x="7.6" y="15" width="3" height="7" fill="#fff" /><circle cx="9" cy="12.5" r="1.8" fill="#fff" /></Svg>;
const WebDoc = () => <Ic w={20}><path d="M1 1 H13 L19 7 V19 H1z" fill="#fff" stroke="#2a5fc8" strokeWidth="1.2" /><path d="M13 1 V7 H19" fill="#bcd" stroke="#2a5fc8" /><circle cx="9.5" cy="13" r="5" fill="#40a050" /><path d="M6 10 Q9 12 13 10 Q13 14 9 13 Q7 15 5.5 13z" fill="#5aa0e8" /></Ic>;
const ClockBig = ({ s = 22 }) => <Svg width={s} height={s} viewBox="0 0 22 22"><circle cx="11" cy="11" r="10" fill="#dbe7f5" stroke="#777" strokeWidth="1.6" /><path d="M11 4 V11 H17" stroke="#111" strokeWidth="1.5" fill="none" /><path d="M11 2v1M11 19v1M2 11h1M19 11h1" stroke="#345" /></Svg>;
const Rainbow = () => <Svg width="22" height="24" viewBox="0 0 22 24"><defs><linearGradient id="rb" x1="0" y1="0" x2="0" y2="1"><stop offset="0" stopColor="#f02020" /><stop offset=".3" stopColor="#f0f020" /><stop offset=".55" stopColor="#20e020" /><stop offset=".8" stopColor="#20c0f0" /><stop offset="1" stopColor="#2020f0" /></linearGradient></defs><rect x="1" y="1" width="8" height="22" fill="url(#rb)" /><path d="M11 6 L20 21" stroke="#111" strokeWidth="2.6" /><path d="M10 0 L11 5 L16 6 L11 7 L10 11 L9 7 L6 6 L9 5z" fill="#fff" /></Svg>;
const Wand = () => <Ic w={24}><path d="M2 10 L9 6 V22 H3z" fill="#4a80e0" stroke="#2a5fc8" /><path d="M10 4H24 L16 11 L22 11 L14 20" fill="none" stroke="#4a80e0" strokeWidth="1.4" /><path d="M12 9 L20 22" stroke="#111" strokeWidth="2.6" /><path d="M11 0 L12 5 L17 6 L12 7 L11 12 L10 7 L6 6 L10 5z" fill="#fff" /><path d="M2 22h10" stroke="#e8b020" strokeWidth="1.4" /></Ic>;
const Robot = () => <Ic w={20} h={22} v="0 0 20 22"><path d="M10 3 L14 1 L19 2 L17 6 L13 5 L12 9 L14 15 L16 19 H9 L7 13 L10 8z" fill="#8a8a98" stroke="#444" strokeWidth=".7" /><circle cx="6" cy="18" r="3" fill="#f09020" /><path d="M2 21H18" stroke="#bbb" strokeWidth="1.2" /></Ic>;

const Check = ({ s = 13 }) => <Ic w={s} v="0 0 13 13"><path d="M.5 7 L3 4.8 L5 7.5 L11 .8 L12.5 2 L5 12z" fill="#1fc23a" stroke="#12a02c" strokeWidth=".4" /></Ic>;
const Maximize = () => <Ic w={12}><rect x=".6" y=".6" width="10.8" height="10.8" fill="none" stroke="#222" strokeWidth="1" /><rect x="1" y="1" width="10" height="2" fill="#222" /></Ic>;
const Exp = ({ minus }) => <Expander><Ic w={9}><rect x=".5" y=".5" width="8" height="8" fill="#fff" stroke="#a0a0a0" /><path d={minus ? 'M2 4.5H7' : 'M2 4.5H7M4.5 2V7'} stroke="#111" /></Ic></Expander>;
const ModelView = () => <Ic w={16}><path d="M2 5 L8 1 L14 5 V11 L8 15 L2 11z M2 5 L8 8.5 L14 5 M8 8.5V15" fill="none" stroke="#1a9a60" strokeWidth="1.2" /><path d="M9 14 L15 11" stroke={R} strokeWidth="1.5" /></Ic>;
const Camera = () => <Ic w={15}><path d="M1 4 L13 1 L14 13 L2 15z" fill="#fff" stroke="#d83020" strokeWidth="1.1" /><circle cx="7" cy="7" r="3.5" fill="#3a5fc8" /><circle cx="7" cy="7" r="1.3" fill="#c83030" /><path d="M9 11h3" stroke="#222" strokeWidth="1.5" /></Ic>;
const Folder = ({ lines }) => <Ic w={16}><path d="M1 5 H6 L7 7 H13 V14 H1z" fill="#fff2c0" stroke="#9a7020" strokeWidth=".8" /><path d="M1 14 L3.5 8 H15.5 L13 14z" fill="#ffc840" stroke="#9a7020" strokeWidth=".8" />{lines && <path d="M9 1h6M9 3.5h6" stroke="#1a2f8c" />}</Ic>;
const CheckBox = () => <Svg width="12" height="12" viewBox="0 0 12 12"><rect x=".5" y=".5" width="11" height="11" fill="#fff" stroke="#111" /><path d="M2 6.5 L4.5 9 L10 3" fill="none" stroke="#12a032" strokeWidth="2" /></Svg>;
const CsysIcon = () => <Ic w={15}><path d="M5 2V12 L13 8 M5 12 L2 5 M2 8 L8 14" fill="none" stroke="#333" strokeWidth="1" /><path d="M2 3 L5 1" stroke={R} /><path d="M11 5 L14 4" stroke="#0a9a30" /></Ic>;
const SketchIcon = () => <Ic w={15}><rect x="1" y="1" width="5" height="5" fill="#fff" stroke="#111" /><rect x="1" y="9" width="5" height="5" fill="#fff" stroke="#111" /><rect x="8.5" y="9" width="5.5" height="5" fill="#fff" stroke="#111" /><path d="M14 1 L9 6" stroke="#e07010" strokeWidth="2" /></Ic>;
const ChevDown = () => <Ic w={12}><path d="M1.5 3 L6 9 L10.5 3" fill="none" stroke="#17789b" strokeWidth="1.8" /></Ic>;
const Flag = () => <Ic w={16}><rect width="16" height="16" fill="#cfcfcf" /><path d="M4 3h8v6H4z" fill="#999" /><path d="M4 3h2v2H4z M8 3h2v2H8z M6 5h2v2H6z M10 5h2v2h-2z M4 7h2v2H4z M8 7h2v2H8z" fill="#fff" /></Ic>;

/* ---------- 3D part ---------- */
const unit = (a, b) => {
  const dx = b[0] - a[0], dy = b[1] - a[1], l = Math.hypot(dx, dy) || 1;
  return [dx / l, dy / l];
};
const curve = pts => {
  let d = '';
  for (let i = 0; i < pts.length - 1; i++) {
    const p0 = pts[i - 1] || pts[i], p1 = pts[i], p2 = pts[i + 1], p3 = pts[i + 2] || p2;
    const len = Math.hypot(p2[0] - p1[0], p2[1] - p1[1]) / 3;
    const t1 = unit(p0, p2), t2 = unit(p1, p3);
    d += `C${p1[0] + t1[0] * len} ${p1[1] + t1[1] * len} ${p2[0] - t2[0] * len} ${p2[1] - t2[1] * len} ${p2[0]} ${p2[1]}`;
  }
  return d;
};
const M = p => `M${p[0]} ${p[1]}`;
const L = p => `L${p[0]} ${p[1]}`;

const TOP = [[408, 497], [418, 475], [428, 462], [452, 440], [482, 431], [502, 427], [525, 426], [685, 431], [820, 435], [847, 437], [880, 443], [913, 454], [1000, 497], [1060, 528], [1158, 580], [1217, 611], [1237, 627], [1253, 647], [1267, 677], [1270, 700], [1263, 730], [1250, 750], [1230, 767], [1203, 780], [1173, 787], [1150, 787], [1030, 784], [913, 782], [867, 780], [833, 777], [798, 770], [767, 760], [733, 746], [607, 680], [480, 614], [458, 600], [438, 580], [418, 553], [408, 520], [408, 497]];
const SIDE = [[407, 513], [395, 550], [395, 573], [408, 610], [432, 640], [467, 663], [594, 729], [720, 795], [753, 810], [790, 822], [817, 827], [853, 830], [920, 832], [1030, 835], [1137, 837], [1163, 837], [1190, 830], [1217, 817], [1240, 797], [1255, 770], [1263, 730]];
const SLOT_UP = [[627, 563], [633, 543], [650, 522], [673, 510], [710, 506], [830, 515], [860, 520], [887, 530], [997, 580], [1020, 597], [1040, 623], [1050, 650]];
const SLOT_LIP = [[1050, 652], [1040, 637], [1020, 607], [997, 588], [887, 538], [830, 522], [710, 513], [673, 514], [650, 528], [633, 548], [627, 563]];
const SLOT_LOW = [[1050, 650], [1047, 677], [1027, 697], [987, 707], [960, 707], [843, 698], [817, 692], [787, 680], [663, 623], [643, 603], [630, 583], [627, 563]];
const WALL_TOP = [[743, 567], [767, 545], [807, 535], [840, 535], [883, 547], [920, 573], [942, 613], [930, 655]];
const FLOOR_TOP = [[733, 603], [767, 583], [807, 577], [843, 580], [887, 603], [930, 655]];
const FLOOR_BOT = [[930, 655], [893, 687], [850, 695], [807, 690], [763, 667], [737, 627], [733, 603]];
const BLUE_ARC1 = [[743, 559], [767, 543], [790, 533], [827, 527], [860, 532], [890, 543], [915, 560], [933, 580], [943, 612]];
const BLUE_ARC2 = [[930, 655], [915, 668], [887, 680], [843, 687], [817, 683], [767, 660], [745, 640], [737, 620], [733, 603]];

const Hole = ({ id, outer, hole, blue, floor }) => (
  <g>
    <ellipse cx={outer[0]} cy={outer[1]} rx="77" ry="55.5" transform={`rotate(18 ${outer[0]} ${outer[1]})`} fill="url(#cone)" stroke="#3a3220" strokeWidth=".8" />
    <clipPath id={id}><ellipse cx={hole[0]} cy={hole[1]} rx="38.4" ry="27.3" transform={`rotate(18 ${hole[0]} ${hole[1]})`} /></clipPath>
    <ellipse cx={hole[0]} cy={hole[1]} rx="38.4" ry="27.3" transform={`rotate(18 ${hole[0]} ${hole[1]})`} fill="url(#holeWall)" stroke="#2a2010" strokeWidth=".8" />
    <g clipPath={`url(#${id})`}>
      <ellipse cx={floor[0]} cy={floor[1]} rx="38.4" ry="27.3" transform={`rotate(18 ${floor[0]} ${floor[1]})`} fill={floor[2]} />
    </g>
    <ellipse cx={blue[0]} cy={blue[1]} rx="39" ry="27.5" transform={`rotate(18 ${blue[0]} ${blue[1]})`} fill="none" stroke="#4a68f0" strokeWidth="1.7" />
  </g>
);

const PartModel = () => (
  <Svg width="100%" height="100%" viewBox="302 188 1116 779" preserveAspectRatio="none">
    <defs>
      <linearGradient id="side" gradientUnits="userSpaceOnUse" x1="395" y1="0" x2="1265" y2="0">
        <stop offset="0" stopColor="#ab6c00" />
        <stop offset=".09" stopColor="#8b5400" />
        <stop offset=".38" stopColor="#8b5400" />
        <stop offset=".53" stopColor="#6a4100" />
        <stop offset=".85" stopColor="#674000" />
        <stop offset="1" stopColor="#a96a00" />
      </linearGradient>
      <linearGradient id="cone" x1="0" y1="1" x2="1" y2="0">
        <stop offset="0" stopColor="#ffa400" />
        <stop offset=".62" stopColor="#ffa400" />
        <stop offset=".82" stopColor="#ffb81e" />
        <stop offset=".92" stopColor="#ffa800" />
        <stop offset="1" stopColor="#ffa400" />
      </linearGradient>
      <linearGradient id="holeWall" x1="0" y1="0" x2="1" y2="0">
        <stop offset="0" stopColor="#9a6000" />
        <stop offset=".42" stopColor="#5e3a00" />
        <stop offset="1" stopColor="#a86a00" />
      </linearGradient>
      <linearGradient id="bigWall" gradientUnits="userSpaceOnUse" x1="733" y1="0" x2="943" y2="0">
        <stop offset="0" stopColor="#ad6c00" />
        <stop offset=".42" stopColor="#6a4100" />
        <stop offset="1" stopColor="#b57000" />
      </linearGradient>
      <linearGradient id="floor" gradientUnits="userSpaceOnUse" x1="0" y1="577" x2="0" y2="695">
        <stop offset="0" stopColor="#d4d5d7" />
        <stop offset="1" stopColor="#e2e3e5" />
      </linearGradient>
    </defs>
    <path d={`${M(SIDE[0])}${curve(SIDE)}Z`} fill="url(#side)" stroke="#2f2a20" strokeWidth=".8" />
    <path d="M479 615 L467 663 M733 746 L720 795 M866 780 L853 830 M1151 787 L1138 837" stroke="#3c3c3c" strokeWidth=".9" />
    <path d={`${M(TOP[0])}${curve(TOP)}Z`} fill="#ffce00" stroke="#4a68f0" strokeWidth="2" />

    <Hole id="h1" outer={[543, 530]} hole={[535.5, 555.5]} blue={[543, 530.5]} floor={[529, 583, '#d4d5d7']} />
    <Hole id="h2" outer={[1134.5, 683.5]} hole={[1128, 708]} blue={[1135, 683.5]} floor={[1122, 733, '#e3e4e6']} />

    <path d={`${M(SLOT_UP[0])}${curve(SLOT_UP)}${L(SLOT_LIP[0])}${curve(SLOT_LIP)}Z`} fill="#7a4c00" stroke="#3a2a00" strokeWidth=".5" />
    <path d="M710 506 L709 513 M830 515 L830 522 M860 520 L858 527 M997 580 L997 588" stroke="#2f2a20" strokeWidth=".7" />
    <path d={`${M(SLOT_LOW[0])}${curve(SLOT_LOW)}`} fill="none" stroke="#4a68f0" strokeWidth="1.5" />
    <path d={`${M(SLOT_UP[0])}${curve(SLOT_UP)}`} fill="none" stroke="#4a68f0" strokeWidth="2" />

    <path d={`${M(WALL_TOP[0])}${curve(WALL_TOP)}${L(FLOOR_TOP[5])}${curve([...FLOOR_TOP].reverse())}Z`} fill="url(#bigWall)" stroke="#2a2010" strokeWidth=".7" />
    <path d={`${M(FLOOR_TOP[0])}${curve(FLOOR_TOP)}${curve(FLOOR_BOT)}Z`} fill="url(#floor)" stroke="#2a2a2a" strokeWidth=".7" />
    <path d="M681 551 L743 567 L733 610 L668 594Z" fill="#754600" stroke="#2a2010" strokeWidth=".7" />
    <path d="M943 619 L1004 633 L995 678 L930 657Z" fill="#754600" stroke="#2a2010" strokeWidth=".7" />
    <path d={`${M(BLUE_ARC1[0])}${curve(BLUE_ARC1)}L1007 627L996 671${L(BLUE_ARC2[0])}${curve(BLUE_ARC2)}L670 587L682 543Z`} fill="none" stroke="#4a68f0" strokeWidth="1.6" />

    <path d="M373 487 L880 618" stroke="#8a8168" strokeWidth="2" strokeDasharray="15 5 4 5" fill="none" />
    <path d="M887 412 L788 811" stroke="#8a8168" strokeWidth="2" strokeDasharray="15 5 4 5" fill="none" />

    <path d="M371 886 L393 892 L385 926 L362 920Z" fill="#d6d6d6" stroke="#a8a8a8" />
    <path d="M364 902 L371 878" stroke="#e03030" strokeWidth="2.6" />
    <path d="M367.5 880 L372.5 874 L374 882z" fill="#e03030" />
    <path d="M364 904 L356 932" stroke="#1a3fc0" strokeWidth="2.6" />
    <path d="M352 930 L354 939 L358 932z" fill="#1a3fc0" />
    <path d="M366 903 L398 911" stroke="#20a030" strokeWidth="2.6" />
    <path d="M396 908 L406 913 L395 914z" fill="#20a030" />
    <circle cx="364" cy="903" r="4" fill="#f4f4f4" stroke="#aaa" />
    <text x="369" y="875" fontSize="11" fill="#e06070" fontFamily="Liberation Sans">X</text>
    <text x="407" y="919" fontSize="11" fill="#20a030" fontFamily="Liberation Sans">Y</text>
    <text x="352" y="939" fontSize="11" fill="#5070e8" fontFamily="Liberation Sans">Z</text>
  </Svg>
);

const WmLogo = () => (
  <Ic w={88} h={100} v="0 0 88 100">
    <path d="M44 2 L86 25 V75 L44 98 L2 75 V25z" fill="#6cc3ea" stroke="#fff" strokeWidth="3" />
    <path d="M44 3 L62 13 Q70 30 66 35 L44 23 L22 35 V63 L8 74 L3 72 V26z" fill="#6f9fd4" />
    <path d="M22 64 L44 76 Q60 84 86 72 M66 36 Q66 15 60 11 M22 36 Q8 28 3 42" fill="none" stroke="#cfeaf6" strokeWidth="1" />
    <path d="M44 23 L66 35 V63 L44 76 L22 63 V35z" fill="#6cc3ea" stroke="#fff" strokeWidth="3.4" />
    <path d="M44 33 L59 41 L44 50 L29 41z" fill="#6f9fd4" />
    <path d="M29 41 L44 50 V68 L29 60z" fill="#6f9fd4" />
    <path d="M44 50 L59 41 V60 L44 68z" fill="#6cc3ea" />
    <path d="M44 33 L59 41 V60 L44 68 L29 60 V41z M29 41 L44 50 L59 41 M44 50V68" fill="none" stroke="#e8f6fc" strokeWidth=".9" />
  </Ic>
);

/* ---------- data ---------- */
const tools = [
  [25, T.g1], [23, T.g2], [20, T.red], [14, 'c'], [25, T.g3], [25, T.g4], [24, T.sel], [14, 'c'], [24, T.wedge], [26, T.cube],
  [25, T.dia, 1], [25, T.l1, 1], [24, T.l2, 1], [25, T.scurve], [26, T.poly, 1], [25, T.wave, 1], [25, T.arch], [25, T.cd, 1], [25, T.cq],
  [25, T.cross, 1], [25, T.l3, 1], [25, T.face], [23, T.grid],
];
const tools2 = [
  [24, T.fit], [24, T.pan], [26, T.rot], [26, T.view], [10, 'c'], [26, T.shade], [10, 'c'], [28, T.bcube], [10, 'c'], [26, T.tri], [10, 'c'],
];
const treeTop = [
  { ic: <ClockBig s={16} />, t: '历史记录模式', line: 'first' },
  { ic: <ModelView />, t: '模型视图', exp: 1 },
  { pre: <Check />, ic: <Camera />, t: '摄像机', exp: 1 },
  { ic: <Folder lines />, t: '用户表达式', exp: 1 },
  { ic: <Folder />, t: '模型历史记录', exp: 2, line: 'last' },
];
const treeSub = [
  { ic: <CsysIcon />, t: '基准坐标系 (0)', off: 1 },
  { ic: <SketchIcon />, t: '草图 (1) "SKETCH_0...' },
  { ic: <Extrude s={15} arrow={false} />, t: '拉伸 (7)' },
  { ic: <Extrude s={15} arrow={false} />, t: '拉伸 (8)' },
  { ic: <Extrude s={15} arrow={false} />, t: '拉伸 (9)' },
  { ic: <Chamfer />, t: '倒斜角 (10)', b: 1 },
];
const Menu = ({ name, left, off }) => (
  <LabelRow>
    {name ? <GroupName $left={left}>{name}</GroupName> : <GroupName />}
    {!off && <MoreCaret><Caret /></MoreCaret>}
  </LabelRow>
);
const BigBtn = ({ w, ml, icon, label, caret, off }) => (
  <Big $w={w} $ml={ml} $off={off}>
    <BigIcon>{icon}</BigIcon>
    <BigLabel>{label}</BigLabel>
    {caret && <BigCaret><Caret /></BigCaret>}
  </Big>
);
const More = ({ icon }) => (
  <MoreWrap>
    <MoreBox>{icon}</MoreBox>
    <MoreLabel>更多</MoreLabel>
    <BigCaret><Caret /></BigCaret>
  </MoreWrap>
);
const SmallBtn = ({ icon, gap, children }) => (
  <Small $gap={gap}>{icon}<SmallText>{children}</SmallText></Small>
);

export default function App() {
  return (
    <Page>
      <Global />
      <TitleBar>
        <QGroup>
          <NxLogo>NX</NxLogo>
          <QSep />
          <QItem $w={31} $pl={3}><Save /></QItem>
          <QSep />
          <QItem $w={30}><Undo /></QItem>
          <QItem $w={6}><Caret /></QItem>
          <QItem $w={27}><Redo /></QItem>
          <QSep />
          <QItem $w={28}><Cut /></QItem>
          <QItem $w={20}><Copy /></QItem>
          <QItem $w={26}><Paste /></QItem>
          <QSep />
          <QItem $w={28}><GreySmear /></QItem>
          <QItem $w={8}><Caret /></QItem>
          <QSep $ml={4} />
          <QItem $w={28}><Eraser /></QItem>
          <QSep />
          <QItem $w={26}><SwitchWin /></QItem>
          <QText>切换窗口</QText>
          <QItem $w={27}><WinIcon /></QItem>
          <QText>窗口</QText>
          <QItem $w={12}><Caret /></QItem>
          <QItem $w={10}><MoreBar><MoreBarLine /><Caret /></MoreBar></QItem>
        </QGroup>
        <WindowTitle>NX 11 - 建模 - [14.prt]</WindowTitle>
        <Siemens>SIEMENS</Siemens>
        <WinBtn $w={18}><Min /></WinBtn>
        <WinBtn $w={26}><Max /></WinBtn>
        <WinBtn $w={20}><Close /></WinBtn>
      </TitleBar>

      <TabBar>
        <FileTab>文件(F)</FileTab>
        <Tab $on>主页</Tab>
        {['装配', '曲线', '分析', '视图', '渲染', '工具'].map(t => <Tab key={t}>{t}</Tab>)}
        <Tab $w={78}>应用模块</Tab>
        <TabRight>
          <Search>查找命令<Glass /></Search>
          <TabIcon $w={40}><FitFrame /></TabIcon>
          <TabIcon $w={12}><UpChev /></TabIcon>
          <TabIcon $w={40}><Help /></TabIcon>
          <TabIcon $w={10} $ml={-4}><Min c="#222" /></TabIcon>
          <TabIcon $w={34}><Restore /></TabIcon>
          <TabIcon $w={13}><Close c="#111" sw={2} /></TabIcon>
        </TabRight>
      </TabBar>

      <Ribbon>
        <Group $w={178}>
          <Body>
            <BigBtn w={40} ml={9} icon={<SketchBig />} label="草图" />
            <Gallery><Sk1 /><Sk2 /><Sk3 /><Sk4 /><Sk5 /><Sk6 /></Gallery>
            <Scroller>
              <Caret $c="#b0b0b0" $up />
              <Caret />
              <MoreBar><MoreBarLine /><Caret /></MoreBar>
            </Scroller>
          </Body>
          <Menu name="直接草图" />
        </Group>

        <Group $w={423}>
          <Body>
            <BigBtn w={52} ml={8} icon={<Datum />} label="基准平面" caret />
            <BigBtn w={34} ml={3} icon={<Extrude />} label="拉伸" caret />
            <IconGrid $ml={5} $cols="24px 25px 25px">
              <Cyl /><Sphere /><Block />
              <Cone /><Thread /><Block hole="#d02020" />
              <Block hole={null} /><Ring /><Block hole="#e03030" />
            </IconGrid>
            <SmallCol $w={73} $ml={5}>
              <SmallBtn icon={<Pattern />}>阵列特征</SmallBtn>
              <Small><Unite /><SmallText>合并</SmallText><Caret $ml={4} /></Small>
              <SmallBtn icon={<Shell />}>抽壳</SmallBtn>
            </SmallCol>
            <SmallCol $w={64}>
              <SmallBtn icon={<Chamfer />}>倒斜角</SmallBtn>
              <SmallBtn icon={<Trim />}>修剪体</SmallBtn>
              <SmallBtn icon={<Blend />}>边倒圆</SmallBtn>
            </SmallCol>
            <SmallCol $w={62}>
              <SmallBtn gap={2} icon={<FaceBlend />}>面倒圆</SmallBtn>
              <SmallBtn gap={2} icon={<Draft />}>拔模</SmallBtn>
            </SmallCol>
            <More icon={<MoreFeat />} />
          </Body>
          <Menu name="特征" />
        </Group>

        <Group $w={234}>
          <Body>
            <BigBtn w={36} ml={10} icon={<MoveFace />} label="移动面" />
            <SmallCol $w={73} $ml={8}>
              <SmallBtn icon={<SyncCube k={<path d="M12 3 L15 9 H13 V14 H11 V9 H9z" fill="#fff" stroke="#222" strokeWidth=".8" />} />}>拉出面</SmallBtn>
              <SmallBtn icon={<SyncCube k={<path d="M10 8h3v3h3v5h-6z" fill="#fff" stroke="#222" />} />}>偏置区域</SmallBtn>
              <SmallBtn icon={<SyncCube k={<path d="M10 8h5v3h-5z M10 12h5v4h-5z" fill="#fff" stroke="#222" />} />}>替换面</SmallBtn>
            </SmallCol>
            <SmallCol $w={64}>
              <SmallBtn icon={<SyncCube k={<path d="M9 7 L16 14 M16 7 L9 14" stroke="#222" strokeWidth="1.5" />} />}>删除面</SmallBtn>
            </SmallCol>
            <More icon={<Refresh />} />
          </Body>
          <Menu name="同步建模" />
        </Group>

        <Group $w={58}>
          <Body>
            <IconGrid $ml={3} $pt={7} $row={29} $cols="24px 24px">
              <Coil /><Spring2 /><Nut /><Scissor />
            </IconGrid>
          </Body>
          <Menu name="弹簧..." left />
        </Group>

        <Group $w={43}>
          <Body><BigBtn w={40} ml={1} icon={<Surface />} label="曲面" caret /></Body>
          <Menu off />
        </Group>

        <Group $w={181}>
          <Body>
            <BigBtn w={46} ml={11} icon={<AsmGrey />} label="处理装配" off />
            <BigBtn w={36} ml={5} icon={<AddAsm />} label="添加" caret />
            <SmallCol $w={70} $ml={8}>
              <SmallBtn icon={<Constraint />}>装配约束</SmallBtn>
              <SmallBtn icon={<MoveComp />}>移动组件</SmallBtn>
              <SmallBtn icon={<PatComp />}>阵列组件</SmallBtn>
            </SmallCol>
          </Body>
          <Menu name="装配" />
        </Group>

        <Group>
          <Body />
          <LabelRow $end><Caret /></LabelRow>
        </Group>
      </Ribbon>

      <Toolbar>
        <MenuBtn><MenuIcon />菜单(M)<Caret /></MenuBtn>
        <ToolSep $ml={0} />
        <Combo $w={133} $ml={12}>无选择过滤器<Caret /></Combo>
        <Combo $w={140} $ml={9}>整个装配<Caret /></Combo>
        <Tool $w={5} />
        {tools.map(([w, ic, on], i) => (
          <Tool key={i} $w={w}>
            {ic === 'c' ? <Caret /> : on ? <Chip $on>{ic}</Chip> : ic}
          </Tool>
        ))}
        <ToolSep $ml={7} />
        <Tool $w={8} />
        {tools2.map(([w, ic], i) => <Tool key={i} $w={w}>{ic === 'c' ? <Caret /> : ic}</Tool>)}
        <ToolSep $ml={8} />
        <ToolEnd><Caret /></ToolEnd>
      </Toolbar>

      <Main>
        <SideBar>
          <SideItem $h={26}><Gear /></SideItem>
          <SideItem $h={40} $mt={16}><AsmNav /></SideItem>
          <SideItem $h={40} $mt={2}><ConstraintBig /></SideItem>
          <SideItem $h={46} $mt={1} $on><PartNav /></SideItem>
          <SideItem $h={38}><Books /></SideItem>
          <SideItem $h={40} $mt={16}><Info /></SideItem>
          <SideItem $h={40} $mt={14}><WebDoc /></SideItem>
          <SideItem $h={40} $mt={12}><ClockBig /></SideItem>
          <SideItem $h={40} $mt={4}><Rainbow /></SideItem>
          <SideItem $h={40} $mt={2}><Wand /></SideItem>
          <SideItem $h={40} $mt={1}><Robot /></SideItem>
        </SideBar>

        <Nav>
          <NavTitle>部件导航器<Maximize /></NavTitle>
          <TreeBox>
            <TreeHead>
              <HeadCell $pl={7} $line>名称<SortUp /></HeadCell>
              <HeadCell $pl={6}>最新</HeadCell>
            </TreeHead>
            <TreeRows>
              {treeTop.map((r, i) => (
                <Row key={r.t} $alt={i % 2 === 1}>
                  <NameCell $pl={7}>
                    <VGuide $x={11} $t={r.line === 'first' ? 9 : 0} $h={r.line === 'first' ? 11 : r.line === 'last' ? 9 : 20} />
                    <HGuide $x={11} $w={9} />
                    {i === 4 && <VGuide $x={30} $t={10} $h={10} />}
                    {r.exp ? <Exp minus={r.exp === 2} /> : <Spacer $w={10} />}
                    {r.pre}
                    {r.ic}
                    <span>{r.t}</span>
                  </NameCell>
                  <LatestCell />
                </Row>
              ))}
              {treeSub.map((r, i) => (
                <Row key={r.t} $alt={(i + 5) % 2 === 1}>
                  <NameCell $pl={41} $off={r.off} $b={r.b}>
                    <VGuide $x={30} $t={0} $h={i === 5 ? 9 : 20} />
                    <HGuide $x={30} $w={11} />
                    <CheckBox />
                    {r.ic}
                    <span>{r.t}</span>
                  </NameCell>
                  <LatestCell><Check /></LatestCell>
                </Row>
              ))}
              {Array.from({ length: 21 }).map((_, i) => (
                <Row key={i} $alt={(i + 11) % 2 === 1}><NameCell $pl={0} /><LatestCell /></Row>
              ))}
            </TreeRows>
            <HScroll>
              <ArrowL />
              <Thumb>III</Thumb>
              <ArrowR />
            </HScroll>
          </TreeBox>
          <PanelRule />
          <Section>相依性<SectionChev><ChevDown /></SectionChev></Section>
          <Section>细节<SectionChev><ChevDown /></SectionChev></Section>
          <Section>预览<SectionChev><ChevDown /></SectionChev></Section>
        </Nav>

        <Viewport><PartModel /></Viewport>
      </Main>

      <StatusBar>
        操作记录录制已继续
        <StatusIcons><Flag /><FitFrame /></StatusIcons>
      </StatusBar>
      <Band />

      <Watermark>
        <WmLogo />
        <WmText>
          <WmBig>3D世界网</WmBig>
          <WmSmall>WWW.3DSJW.COM</WmSmall>
        </WmText>
      </Watermark>
    </Page>
  );
}
